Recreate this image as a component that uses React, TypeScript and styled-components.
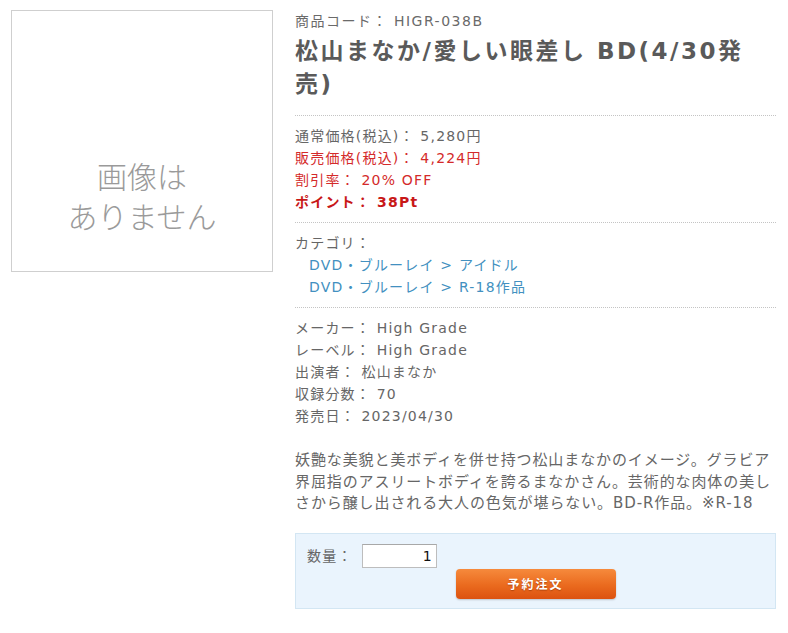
import React from "react";
import styled, { createGlobalStyle } from "styled-components";

const Global = createGlobalStyle`
  html, body { margin: 0; padding: 0; background: #fff; }
  body { font-family: "DejaVu Sans", "Noto Sans CJK JP", sans-serif; color: #666; }
`;

const Page = styled.div`
  display: flex;
  align-items: flex-start;
  gap: 22px;
  padding: 10px 12px 0 11px;
  width: 788px;
  box-sizing: border-box;
`;

const LeftCol = styled.div`
  display: flex;
  flex-direction: column;
  width: 262px;
  flex: none;
`;

const ImageBox = styled.div`
  width: 262px;
  height: 262px;
  box-sizing: border-box;
  border: 1px solid #cfcfcf;
  padding-top: 144px;
  text-align: center;
  font-family: "Noto Sans CJK JP", sans-serif;
  font-weight: 300;
  font-size: 30px;
  line-height: 40px;
  color: #9a9a9a;
`;

const RightCol = styled.div`
  flex: 1;
  min-width: 0;
  display: flex;
  flex-direction: column;
  font-size: 14px;
  letter-spacing: 1.2px;
  line-height: 22px;
`;

const Code = styled.div`
  color: #6a6a6a;
  letter-spacing: 1.5px;
`;

const Title = styled.h1`
  margin: 3px 0 14px;
  max-width: 460px;
  font-size: 23px;
  line-height: 33px;
  font-weight: bold;
  letter-spacing: 2.5px;
  color: #5a5a5a;
`;

const Section = styled.div`
  border-top: 1px dotted #c4c4c4;
  padding: 9px 0;
`;

const Row = styled.div<{ $tone?: "normal" | "red" | "point" }>`
  color: ${(p) => (p.$tone === "red" ? "#d42a2a" : p.$tone === "point" ? "#c81818" : "#666")};
  font-weight: ${(p) => (p.$tone === "point" ? "bold" : "normal")};
`;

const CatLink = styled.a`
  display: block;
  padding-left: 14px;
  color: #4290c0;
  text-decoration: none;
`;

const Desc = styled.p`
  margin: 14px 0 18px;
  color: #666;
  font-size: 15px;
  line-height: 21.5px;
  letter-spacing: 0.9px;
`;

const CartBox = styled.div`
  background: #eaf4fd;
  border: 1px solid #d3e6f3;
  padding: 10px 11px 9px;
  display: flex;
  flex-direction: column;
`;

const QtyRow = styled.div`
  display: flex;
  align-items: center;
  gap: 9px;
  color: #666;
`;

const QtyInput = styled.input`
  width: 75px;
  height: 24px;
  box-sizing: border-box;
  border: 1px solid #bdbdbd;
  border-top-color: #a8a8a8;
  background: #fff;
  text-align: right;
  font-family: "DejaVu Sans", sans-serif;
  font-size: 14px;
  color: #111;
  padding: 0 4px;
`;

const OrderButton = styled.button`
  align-self: center;
  margin-top: 1px;
  width: 160px;
  height: 30px;
  border: none;
  border-radius: 4px;
  background: linear-gradient(#f68a3c, #ea6a1e 55%, #dc5210);
  box-shadow: 0 1px 2px rgba(0, 0, 0, 0.2);
  color: #fff;
  text-shadow: 0 1px 1px rgba(120, 40, 0, 0.5);
  font-family: "Noto Sans CJK JP", sans-serif;
  font-weight: bold;
  font-size: 12px;
  letter-spacing: 2px;
`;

export default function App() {
  return (
    <>
      <Global />
      <Page>
        <LeftCol>
          <ImageBox>
            画像は
            <br />
            ありません
          </ImageBox>
        </LeftCol>
        <RightCol>
          <Code>商品コード： HIGR-038B</Code>
          <Title>松山まなか/愛しい眼差し BD(4/30発売)</Title>
          <Section>
            <Row>通常価格(税込)： 5,280円</Row>
            <Row $tone="red">販売価格(税込)： 4,224円</Row>
            <Row $tone="red">割引率： 20% OFF</Row>
            <Row $tone="point">ポイント： 38Pt</Row>
          </Section>
          <Section>
            <Row>カテゴリ：</Row>
            <CatLink href="#">DVD・ブルーレイ &gt; アイドル</CatLink>
            <CatLink href="#">DVD・ブルーレイ &gt; R-18作品</CatLink>
          </Section>
          <Section>
            <Row>メーカー： High Grade</Row>
            <Row>レーベル： High Grade</Row>
            <Row>出演者： 松山まなか</Row>
            <Row>収録分数： 70</Row>
            <Row>発売日： 2023/04/30</Row>
          </Section>
          <Desc>
            妖艶な美貌と美ボディを併せ持つ松山まなかのイメージ。グラビア界屈指のアスリートボディを誇るまなかさん。芸術的な肉体の美しさから醸し出される大人の色気が堪らない。BD-R作品。※R-18
          </Desc>
          <CartBox>
            <QtyRow>
              <span>数量：</span>
              <QtyInput defaultValue="1" />
            </QtyRow>
            <OrderButton>予約注文</OrderButton>
          </CartBox>
        </RightCol>
      </Page>
    </>
  );
}
